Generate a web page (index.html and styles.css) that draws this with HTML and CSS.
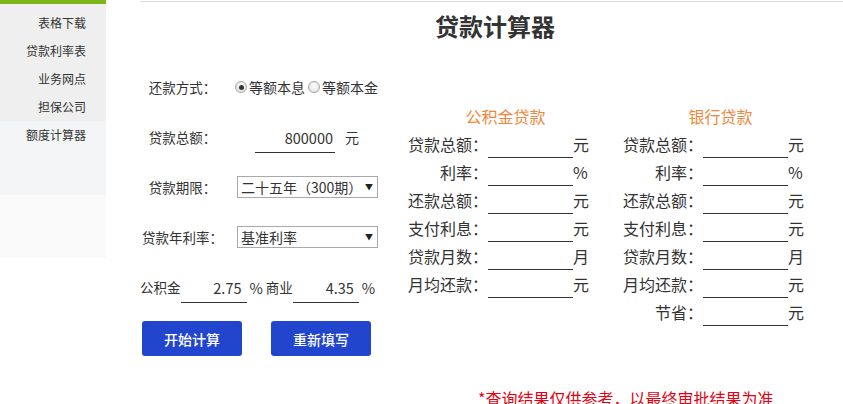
FILE: index.html
```html
<!DOCTYPE html>
<html lang="zh-CN">
<head>
<meta charset="utf-8">
<title>贷款计算器</title>
<link rel="stylesheet" href="styles.css">
</head>
<body>
<div class="page">
  <aside class="sidebar">
    <ul class="nav">
      <li class="nav-item">表格下载</li>
      <li class="nav-item">贷款利率表</li>
      <li class="nav-item">业务网点</li>
      <li class="nav-item">担保公司</li>
      <li class="nav-item nav-active">额度计算器</li>
    </ul>
    <div class="nav-fill1"></div>
    <div class="nav-fill2"></div>
  </aside>
  <main class="main">
    <h1 class="title">贷款计算器</h1>
    <div class="columns">
      <section class="form">
        <div class="frow">
          <span class="flabel">还款方式：</span>
          <span class="radio radio-on"></span><span class="ropt">等额本息</span>
          <span class="radio"></span><span class="ropt">等额本金</span>
        </div>
        <div class="frow">
          <span class="flabel">贷款总额：</span>
          <span class="uinput amount">800000</span>
          <span class="funit">元</span>
        </div>
        <div class="frow">
          <span class="flabel">贷款期限：</span>
          <div class="select"><span class="stext">二十五年（300期）</span><span class="arrow">▼</span></div>
        </div>
        <div class="frow">
          <span class="flabel">贷款年利率：</span>
          <div class="select"><span class="stext">基准利率</span><span class="arrow">▼</span></div>
        </div>
        <div class="frow rates">
          <span class="rlabel">公积金</span>
          <span class="uinput rate">2.75</span>
          <span class="pct">%</span>
          <span class="rlabel">商业</span>
          <span class="uinput rate">4.35</span>
          <span class="pct">%</span>
        </div>
        <div class="buttons">
          <button class="btn">开始计算</button>
          <button class="btn">重新填写</button>
        </div>
      </section>
      <section class="results">
        <div class="rtable">
          <div class="rtitle">公积金贷款</div>
          <span class="rl">贷款总额：</span><span class="ri"></span><span class="ru">元</span>
          <span class="rl">利率：</span><span class="ri"></span><span class="ru">%</span>
          <span class="rl">还款总额：</span><span class="ri"></span><span class="ru">元</span>
          <span class="rl">支付利息：</span><span class="ri"></span><span class="ru">元</span>
          <span class="rl">贷款月数：</span><span class="ri"></span><span class="ru">月</span>
          <span class="rl">月均还款：</span><span class="ri"></span><span class="ru">元</span>
        </div>
        <div class="rtable">
          <div class="rtitle">银行贷款</div>
          <span class="rl">贷款总额：</span><span class="ri"></span><span class="ru">元</span>
          <span class="rl">利率：</span><span class="ri"></span><span class="ru">%</span>
          <span class="rl">还款总额：</span><span class="ri"></span><span class="ru">元</span>
          <span class="rl">支付利息：</span><span class="ri"></span><span class="ru">元</span>
          <span class="rl">贷款月数：</span><span class="ri"></span><span class="ru">月</span>
          <span class="rl">月均还款：</span><span class="ri"></span><span class="ru">元</span>
          <span class="rl">节省：</span><span class="ri"></span><span class="ru">元</span>
        </div>
      </section>
    </div>
    <p class="note">*查询结果仅供参考，以最终审批结果为准</p>
  </main>
</div>
</body>
</html>
```
FILE: styles.css
```css
html, body {
  margin: 0;
  padding: 0;
  overflow: hidden;
  background: #fff;
}
body {
  font-family: "Noto Sans CJK SC", "Noto Sans", sans-serif;
  color: #333;
  width: 843px;
  height: 404px;
}
.page {
  display: flex;
  align-items: flex-start;
}
.sidebar {
  width: 106px;
  flex: none;
  border-top: 4px solid #7db51a;
  display: flex;
  flex-direction: column;
}
.nav {
  list-style: none;
  margin: 0;
  padding: 5px 0 0;
  background: #efefef;
}
.nav-item {
  height: 28px;
  line-height: 28px;
  font-size: 12px;
  text-align: right;
  padding-right: 20px;
  color: #333;
}
.nav-active {
  background: #f4f5f6;
}
.nav-fill1 {
  height: 46px;
  background: #f4f5f6;
}
.nav-fill2 {
  height: 63px;
  background: #fafafa;
}
.main {
  margin-left: 34px;
  margin-top: 1px;
  flex: 1;
  border-top: 1px solid #dcdcdc;
}
.title {
  margin: 9px 0 9px;
  padding-left: 7px;
  font-size: 24px;
  line-height: 30px;
  font-weight: bold;
  text-align: center;
  color: #333;
}
.columns {
  display: flex;
  align-items: flex-start;
}
.form {
  width: 250px;
  flex: none;
  padding-top: 23px;
}
.frow {
  height: 28px;
  margin-bottom: 22px;
  display: flex;
  align-items: center;
  font-size: 14px;
  white-space: nowrap;
}
.flabel {
  width: 85px;
  flex: none;
  text-align: center;
  font-size: 13.5px;
  color: #333;
}
.radio {
  width: 10px;
  height: 10px;
  border: 1px solid #a5a5a5;
  border-radius: 50%;
  background: radial-gradient(circle at 50% 40%, #fdfdfd, #dcdcdc);
  margin-left: 10px;
  margin-right: 2px;
  display: flex;
  align-items: center;
  justify-content: center;
  flex: none;
}
.radio + .ropt + .radio {
  margin-left: 3px;
}
.radio-on::after {
  content: "";
  width: 5px;
  height: 5px;
  border-radius: 50%;
  background: #333;
}
.ropt {
  font-size: 14px;
  color: #333;
}
.uinput {
  display: block;
  height: 28px;
  line-height: 28px;
  padding-top: 1px;
  border-bottom: 1px solid #333;
  text-align: right;
  box-sizing: content-box;
  align-self: flex-start;
  font-size: 14.5px;
  color: #333;
}
.amount {
  width: 78px;
  padding-right: 2px;
  margin-left: 30px;
}
.funit {
  margin-left: 10px;
  font-size: 14px;
}
.select {
  margin-left: 12px;
  height: 20px;
  border: 1px solid #a9a9a9;
  display: flex;
  align-items: center;
  justify-content: space-between;
  padding-left: 3px;
  padding-right: 4px;
  box-sizing: content-box;
  width: 132px;
  font-size: 14px;
  line-height: 20px;
  color: #333;
  flex: none;
}
.stext {
  white-space: nowrap;
}
.arrow {
  flex: none;
  font-size: 8px;
  color: #222;
}
.rates {
  font-size: 14px;
}
.rlabel {
  font-size: 13.5px;
  color: #333;
}
.rate {
  width: 61px;
  padding-right: 5px;
}
.pct {
  margin-left: 3px;
  margin-right: 3px;
  font-size: 14.5px;
}
.buttons {
  display: flex;
  gap: 29px;
  margin-top: -2px;
  padding-left: 2px;
}
.btn {
  width: 100px;
  height: 35px;
  border: none;
  border-radius: 3px;
  background: #2145cd;
  color: #fff;
  font-family: "Noto Sans CJK SC", "Noto Sans", sans-serif;
  font-size: 14px;
  font-weight: 500;
  padding: 0;
}
.results {
  display: flex;
  align-items: flex-start;
  gap: 34px;
  margin-left: 18px;
  padding-top: 52px;
}
.rtable {
  display: grid;
  grid-template-columns: 80px 85px 16px;
  grid-auto-rows: 28px;
  font-size: 16px;
  color: #333;
}
.rtitle {
  grid-column: 1 / 4;
  text-align: center;
  padding-left: 14px;
  line-height: 28px;
  color: #f0863a;
  margin-bottom: 4px;
}
.rl {
  text-align: right;
  line-height: 28px;
  white-space: nowrap;
}
.ri {
  border-bottom: 1px solid #333;
  height: 27px;
}
.ru {
  line-height: 28px;
}
.note {
  margin: 32px 0 0;
  padding-left: 338px;
  font-size: 16px;
  line-height: 20px;
  color: #e60012;
  white-space: nowrap;
}
```
